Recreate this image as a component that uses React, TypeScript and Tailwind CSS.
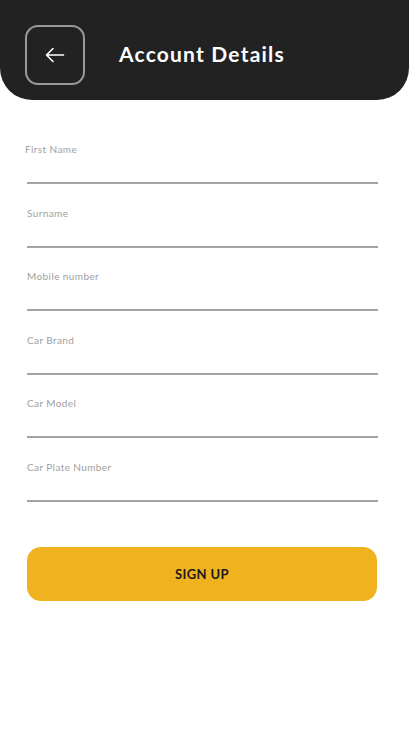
import React from "react";

const fields = ["First Name", "Surname", "Mobile number", "Car Brand", "Car Model", "Car Plate Number"];

export default function App() {
  return (
    <div className="w-full min-h-[729px] bg-white" style={{ fontFamily: "Lato, 'Open Sans', sans-serif" }}>
      <header className="h-[100px] bg-[#222222] rounded-b-[32px] flex items-start pt-[25px] pl-[25px]">
        <button className="w-[60px] h-[60px] rounded-[13px] border-2 border-[#9a9a9a] flex items-center justify-center">
          <svg width="20" height="16" viewBox="0 0 20 16" fill="none">
            <path d="M18.5 8H1.5M8 1.5L1.5 8L8 14.5" stroke="white" strokeWidth="1.6" strokeLinecap="round" strokeLinejoin="round" />
          </svg>
        </button>
        <h1 className="ml-[34px] mt-[14px] text-[21px] leading-[30px] font-bold text-white tracking-[1.2px]">Account Details</h1>
      </header>
      <div className="pl-[27px] pr-[31px] pt-[43px] flex flex-col gap-[22.6px]">
        {fields.map((f, i) => (
          <div key={f} className="flex flex-col">
            <span className={`text-[10px] leading-[12px] text-[#a0a0a0] tracking-[0.4px] ${i === 0 ? "-ml-[2px]" : ""}`}>{f}</span>
            <div className="h-[27px]" />
            <div className="h-[2px] bg-[#a3a3a3]" />
          </div>
        ))}
      </div>
      <div className="pl-[27px] pr-[32px] pt-[45px]">
        <button className="w-full h-[54px] rounded-[14px] bg-[#f0b31f] flex items-center justify-center pt-[1px] text-[13px] font-bold text-[#1a1a1a] tracking-[0.4px]">
          SIGN UP
        </button>
      </div>
    </div>
  );
}
